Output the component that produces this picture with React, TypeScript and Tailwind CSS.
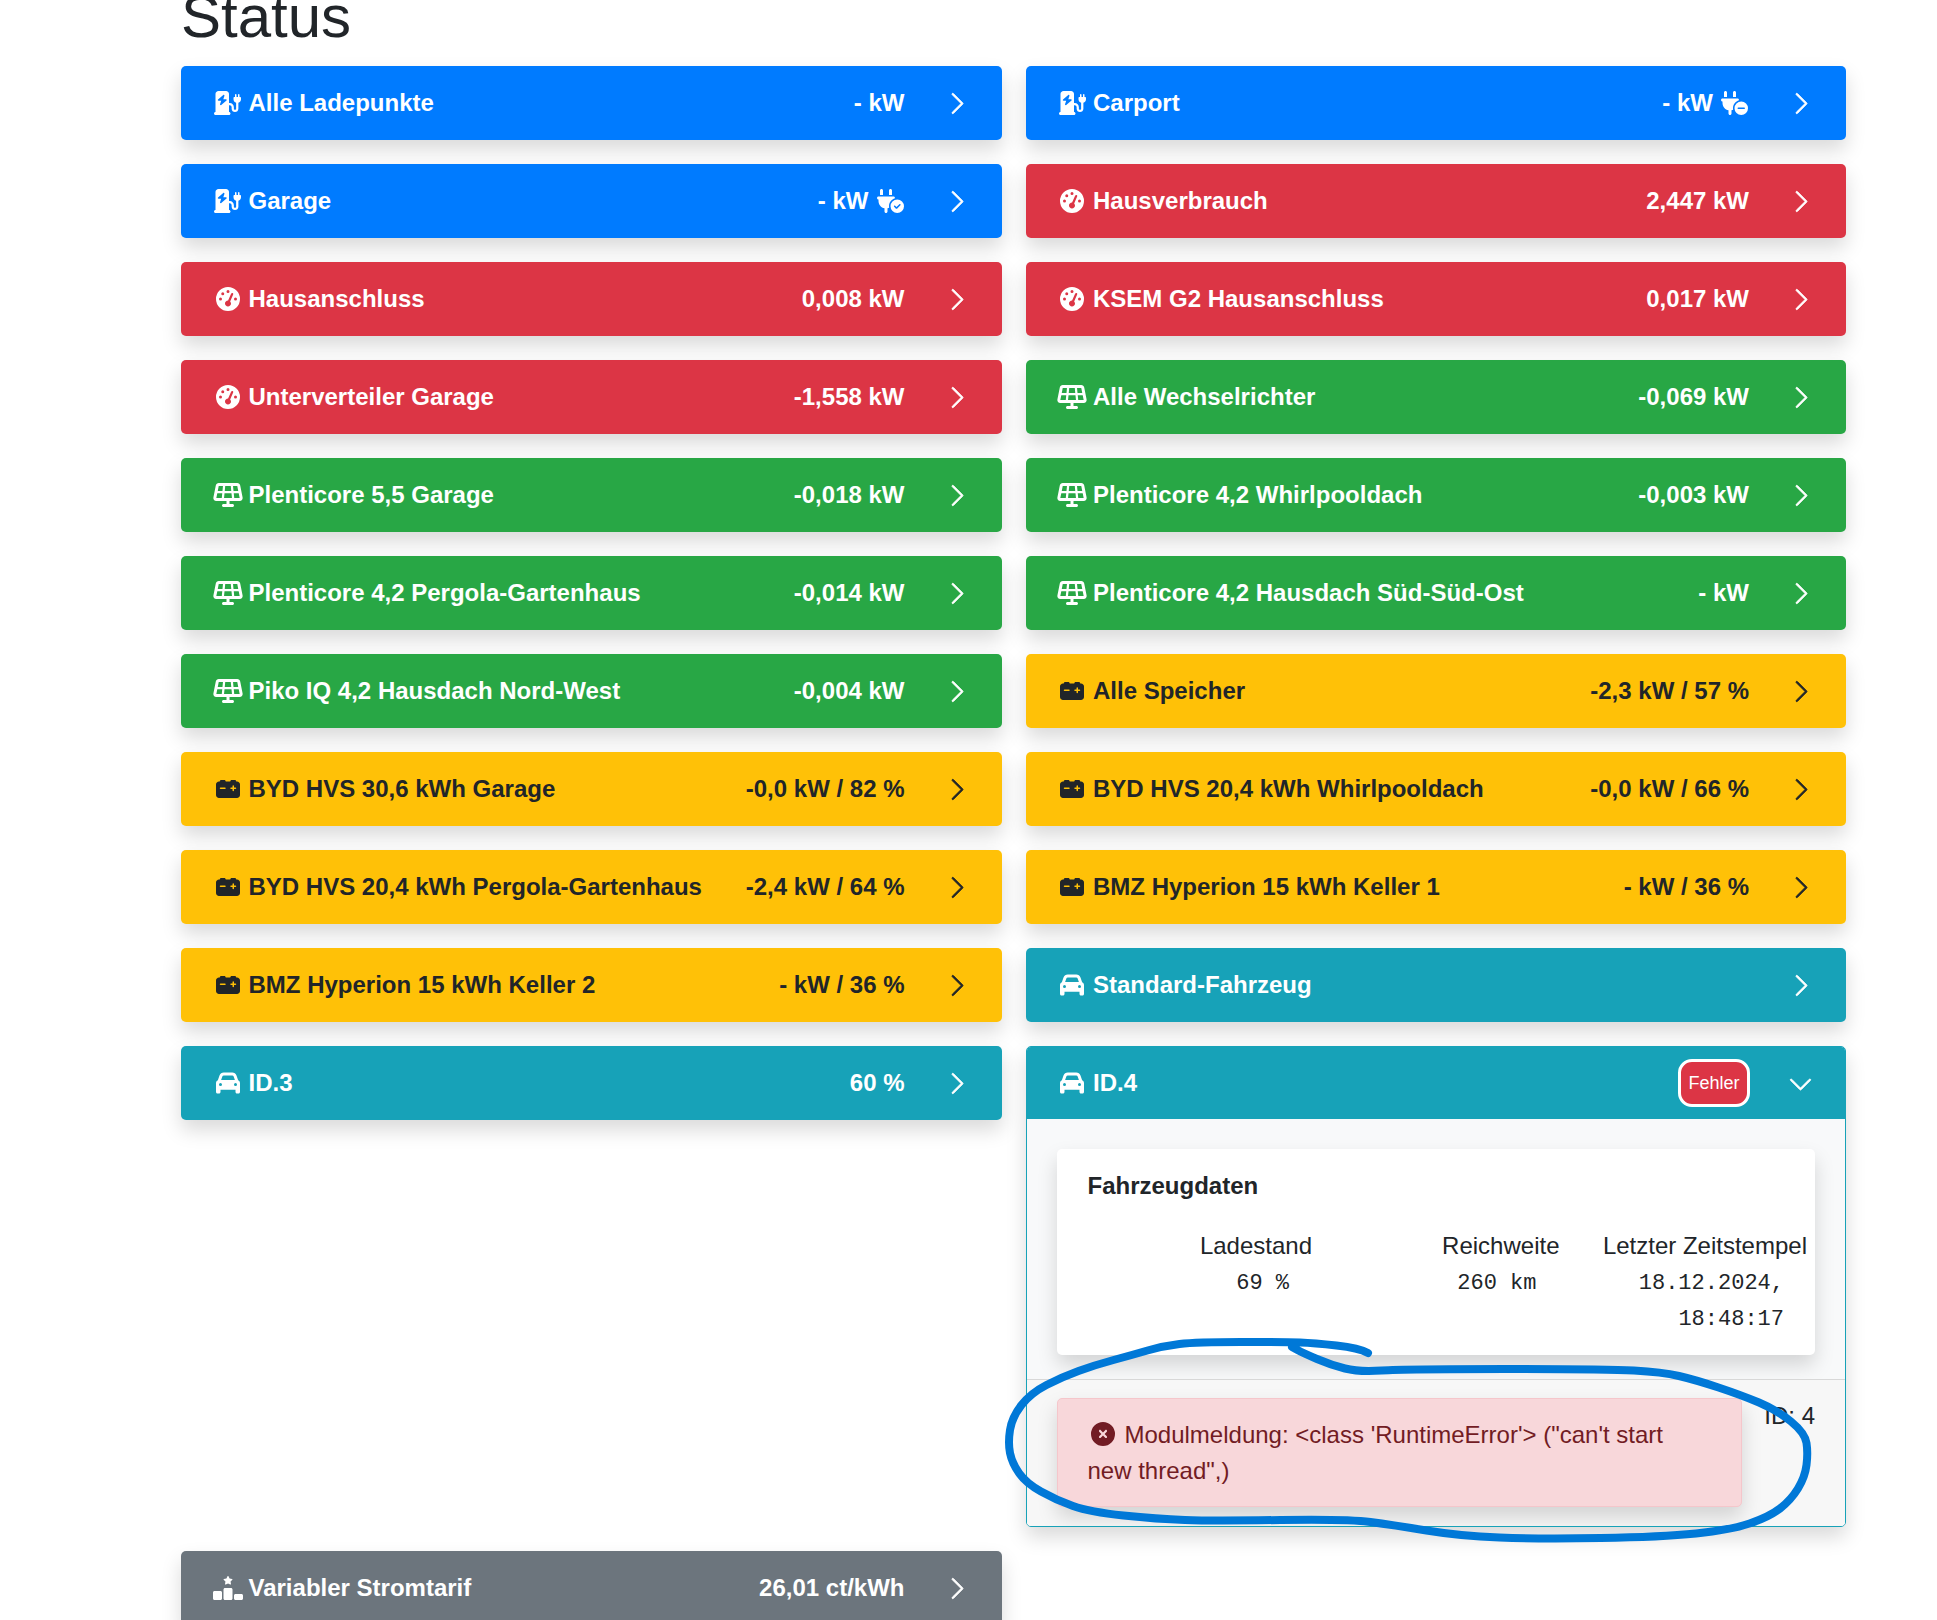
import type { ReactNode } from 'react';
import {
  FaCar,
  FaCarBattery,
  FaChargingStation,
  FaCircleXmark,
  FaGaugeHigh,
  FaPlugCircleCheck,
  FaPlugCircleMinus,
  FaRankingStar,
  FaSolarPanel,
} from 'react-icons/fa6';

type Kind = 'charge' | 'meter' | 'solar' | 'battery' | 'car' | 'tariff';

type Item = {
  kind: Kind;
  label: string;
  value?: string;
  plug?: 'minus' | 'check';
};

const KIND_STYLES: Record<Kind, string> = {
  charge: 'bg-[#007bff] text-white',
  meter: 'bg-[#dc3545] text-white',
  solar: 'bg-[#28a745] text-white',
  battery: 'bg-[#ffc107] text-[#212529]',
  car: 'bg-[#17a2b8] text-white',
  tariff: 'bg-[#6c757d] text-white',
};

function KindIcon({ kind }: { kind: Kind }) {
  if (kind === 'charge') return <FaChargingStation className="h-6 w-[27px] shrink-0" />;
  if (kind === 'meter') return <FaGaugeHigh className="h-6 w-6 shrink-0" />;
  if (kind === 'solar') return <FaSolarPanel className="h-6 w-[30px] shrink-0" />;
  if (kind === 'battery') return <FaCarBattery className="h-6 w-6 shrink-0" />;
  if (kind === 'car') return <FaCar className="h-6 w-6 shrink-0" />;
  return <FaRankingStar className="h-6 w-[30px] shrink-0" />;
}

function Chevron({ down }: { down?: boolean }) {
  return (
    <svg
      viewBox="0 0 16 16"
      fill="currentColor"
      stroke="currentColor"
      strokeWidth="0.6"
      className={down ? 'h-[25px] w-[25px] rotate-90' : 'h-[25px] w-[25px]'}
    >
      <path
        fillRule="evenodd"
        d="M4.646 1.646a.5.5 0 0 1 .708 0l6 6a.5.5 0 0 1 0 .708l-6 6a.5.5 0 0 1-.708-.708L10.293 8 4.646 2.354a.5.5 0 0 1 0-.708z"
      />
    </svg>
  );
}

function BarLabel({ kind, label }: { kind: Kind; label: string }) {
  return (
    <div className="flex min-w-0 items-center">
      <span className="flex w-[27px] shrink-0 justify-center">
        <KindIcon kind={kind} />
      </span>
      <span className="ml-[7.5px] whitespace-nowrap">{label}</span>
    </div>
  );
}

function StatusBar({ item }: { item: Item }) {
  return (
    <div
      className={`flex h-[74px] items-center rounded-[5px] pl-[33px] pr-[32px] text-2xl font-bold shadow-[0_10px_20px_rgba(0,0,0,0.15)] ${KIND_STYLES[item.kind]}`}
    >
      <BarLabel kind={item.kind} label={item.label} />
      <div className="ml-auto flex items-center whitespace-nowrap">
        {item.value}
        {item.plug === 'minus' && <FaPlugCircleMinus className="ml-[8px] mr-[1px] h-6 w-[27px]" />}
        {item.plug === 'check' && <FaPlugCircleCheck className="ml-[8px] mr-[1px] h-6 w-[27px]" />}
      </div>
      <div className="ml-10">
        <Chevron />
      </div>
    </div>
  );
}

function DataColumn({ title, children }: { title: string; children: ReactNode }) {
  return (
    <div className="text-right">
      <div className="text-2xl leading-9 text-[#212529]">{title}</div>
      <div className="mt-[2px] pr-[23px] font-['Liberation_Mono',monospace] text-[22px] leading-9 text-[#212529]">
        {children}
      </div>
    </div>
  );
}

function VehiclePanel() {
  return (
    <div className="overflow-hidden rounded-[5px] border border-[#17a2b8] bg-[#f8f9fa] shadow-[0_10px_20px_rgba(0,0,0,0.15)]">
      <div className="-mx-px -mt-px flex h-[73px] items-center bg-[#17a2b8] pl-[33px] pr-[33px] text-2xl font-bold text-white">
        <BarLabel kind="car" label="ID.4" />
        <span className="ml-auto flex h-[48px] w-[72px] items-center justify-center rounded-[14px] border-[3px] border-white bg-[#dc3545] text-lg font-normal">
          Fehler
        </span>
        <div className="ml-[38px] mt-[4px]">
          <Chevron down />
        </div>
      </div>
      <div className="px-[30px] pb-6 pt-[30px]">
        <div className="h-[206px] rounded-[5px] bg-white pt-[19px] shadow-[0_10px_20px_rgba(0,0,0,0.15)]">
          <div className="pl-[31px] text-2xl font-bold leading-9 text-[#212529]">Fahrzeugdaten</div>
          <div className="mt-[24px] grid grid-cols-3 pl-[8px] pr-2">
            <DataColumn title="Ladestand">69 %</DataColumn>
            <DataColumn title="Reichweite">260 km</DataColumn>
            <DataColumn title="Letzter Zeitstempel">
              18.12.2024,
              <br />
              18:48:17
            </DataColumn>
          </div>
        </div>
      </div>
      <div className="flex items-start justify-between border-t border-[rgba(0,0,0,0.125)] bg-[#f7f7f7] pb-[19px] pl-[30px] pr-[30px] pt-[18px]">
        <div className="h-[109px] w-[685px] rounded-[5px] border border-[#f5c6cb] bg-[#f8d7da] px-[30px] py-[18px] text-2xl leading-9 text-[#721c24] shadow-[0_10px_20px_rgba(0,0,0,0.15)]">
          <FaCircleXmark className="mr-[10px] ml-[3px] inline-block h-6 w-6 align-[-3px]" />
          Modulmeldung: &lt;class 'RuntimeError'&gt; ("can't start new thread",)
        </div>
        <div className="text-2xl leading-9 text-[#212529]">ID: 4</div>
      </div>
    </div>
  );
}

const ITEMS: (Item | 'panel' | 'empty')[] = [
  { kind: 'charge', label: 'Alle Ladepunkte', value: '- kW' },
  { kind: 'charge', label: 'Carport', value: '- kW', plug: 'minus' },
  { kind: 'charge', label: 'Garage', value: '- kW', plug: 'check' },
  { kind: 'meter', label: 'Hausverbrauch', value: '2,447 kW' },
  { kind: 'meter', label: 'Hausanschluss', value: '0,008 kW' },
  { kind: 'meter', label: 'KSEM G2 Hausanschluss', value: '0,017 kW' },
  { kind: 'meter', label: 'Unterverteiler Garage', value: '-1,558 kW' },
  { kind: 'solar', label: 'Alle Wechselrichter', value: '-0,069 kW' },
  { kind: 'solar', label: 'Plenticore 5,5 Garage', value: '-0,018 kW' },
  { kind: 'solar', label: 'Plenticore 4,2 Whirlpooldach', value: '-0,003 kW' },
  { kind: 'solar', label: 'Plenticore 4,2 Pergola-Gartenhaus', value: '-0,014 kW' },
  { kind: 'solar', label: 'Plenticore 4,2 Hausdach Süd-Süd-Ost', value: '- kW' },
  { kind: 'solar', label: 'Piko IQ 4,2 Hausdach Nord-West', value: '-0,004 kW' },
  { kind: 'battery', label: 'Alle Speicher', value: '-2,3 kW / 57 %' },
  { kind: 'battery', label: 'BYD HVS 30,6 kWh Garage', value: '-0,0 kW / 82 %' },
  { kind: 'battery', label: 'BYD HVS 20,4 kWh Whirlpooldach', value: '-0,0 kW / 66 %' },
  { kind: 'battery', label: 'BYD HVS 20,4 kWh Pergola-Gartenhaus', value: '-2,4 kW / 64 %' },
  { kind: 'battery', label: 'BMZ Hyperion 15 kWh Keller 1', value: '- kW / 36 %' },
  { kind: 'battery', label: 'BMZ Hyperion 15 kWh Keller 2', value: '- kW / 36 %' },
  { kind: 'car', label: 'Standard-Fahrzeug' },
  { kind: 'car', label: 'ID.3', value: '60 %' },
  'panel',
  { kind: 'tariff', label: 'Variabler Stromtarif', value: '26,01 ct/kWh' },
  'empty',
];

// the hand-drawn circle somebody put on the screenshot
const SCRIBBLE: [number, number][] = [
  [1368, 1353], [1359, 1348], [1314, 1343], [1286, 1342], [1196, 1342], [1163, 1346], [1132, 1355], [1095, 1365],
  [1062, 1377], [1031, 1393], [1012, 1417], [1008, 1443], [1012, 1463], [1026, 1483], [1056, 1500], [1090, 1512],
  [1157, 1519], [1213, 1521], [1348, 1519], [1393, 1525], [1460, 1536], [1539, 1539], [1662, 1537], [1730, 1530],
  [1769, 1517], [1791, 1500], [1805, 1477], [1808, 1453], [1805, 1433], [1777, 1410], [1741, 1395], [1696, 1380],
  [1662, 1372], [1606, 1369], [1404, 1369], [1359, 1372], [1331, 1365], [1303, 1353], [1292, 1347],
];

function scribblePath() {
  let d = `M${SCRIBBLE[0][0]} ${SCRIBBLE[0][1]}`;
  for (let i = 1; i < SCRIBBLE.length - 1; i++) {
    const [x, y] = SCRIBBLE[i];
    const [nx, ny] = SCRIBBLE[i + 1];
    d += ` Q${x} ${y} ${(x + nx) / 2} ${(y + ny) / 2}`;
  }
  const last = SCRIBBLE[SCRIBBLE.length - 1];
  return `${d} L${last[0]} ${last[1]}`;
}

export default function App() {
  return (
    <div className="relative h-[1620px] w-[1937px] overflow-hidden bg-white font-['Liberation_Sans',Arial,sans-serif]">
      <div className="ml-[181px] w-[1665px]">
        <h1 className="-mt-[19px] mb-[13px] text-[60px] font-light leading-[72px] text-[#212529]">Status</h1>
        <div className="grid grid-cols-2 items-start gap-x-6 gap-y-6">
          {ITEMS.map((item, i) => {
            if (item === 'panel') return <VehiclePanel key={i} />;
            if (item === 'empty') return <div key={i} />;
            return <StatusBar key={i} item={item} />;
          })}
        </div>
      </div>
      <svg className="pointer-events-none absolute left-0 top-0 h-[1620px] w-[1937px]" viewBox="0 0 1937 1620" fill="none">
        <path d={scribblePath()} stroke="#0078d7" strokeWidth="8" strokeLinecap="round" strokeLinejoin="round" />
      </svg>
    </div>
  );
}
